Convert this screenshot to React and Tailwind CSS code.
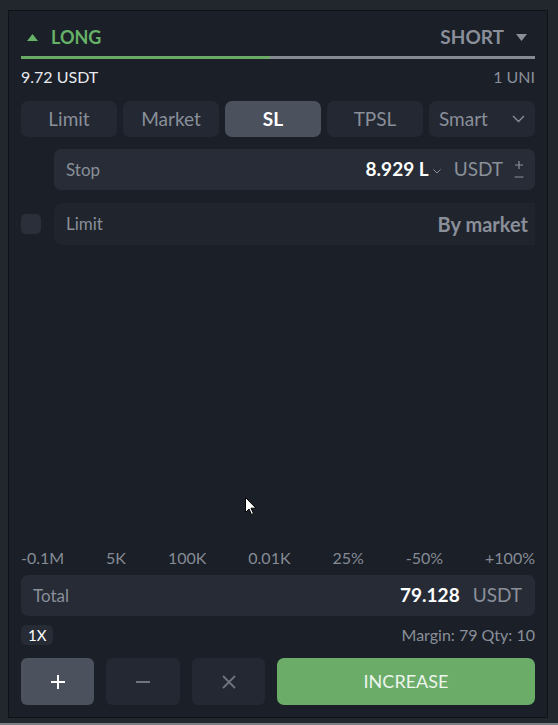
import React from 'react';

const font = { fontFamily: 'Lato, "Open Sans", sans-serif' };

const tabs = ['Limit', 'Market', 'SL', 'TPSL'];
const marks = ['-0.1M', '5K', '100K', '0.01K', '25%', '-50%', '+100%'];

const App = () => {
  return (
    <div className="w-[558px] h-[725px] bg-[#22262d] flex flex-col overflow-hidden" style={font}>
      <div className="pt-[10px] pl-[8px] pr-[10px]">
        <div className="w-[540px] h-[708px] border border-[#0e1116] bg-[#1a1f28] px-[12px] flex flex-col">
          {/* side switch */}
          <div className="mt-[11px] h-[30px] flex items-center justify-between">
            <div className="flex items-center gap-[13px] pl-[6px]">
              <svg width="11" height="7" viewBox="0 0 11 7"><path d="M5.5 0L11 7H0z" fill="#66b266" /></svg>
              <span className="text-[18px] font-bold text-[#66b266]">LONG</span>
            </div>
            <div className="flex items-center gap-[12px] pr-[8px]">
              <span className="text-[19px] font-bold text-[#8a8f99]">SHORT</span>
              <svg width="11" height="7" viewBox="0 0 11 7"><path d="M0 0H11L5.5 7z" fill="#8a8f99" /></svg>
            </div>
          </div>
          <div className="mt-[4px] h-[3px] flex">
            <div className="w-[249px] bg-[#6aaa64]" />
            <div className="flex-1 bg-[#868a93]" />
          </div>
          <div className="mt-[9px] h-[18px] flex items-center justify-between">
            <span className="text-[16px] text-[#e8eaee]">9.72 USDT</span>
            <span className="text-[16px] text-[#8a8f99]">1 UNI</span>
          </div>

          {/* order types */}
          <div className="mt-[15px] h-[36px] flex gap-[6px]">
            {tabs.map(t => (
              <div
                key={t}
                className={`w-[96px] rounded-[7px] flex items-center justify-center text-[19px] ${t === 'SL' ? 'bg-[#4b515d] text-white font-bold' : 'bg-[#232832] text-[#8a8f99]'}`}
              >
                {t}
              </div>
            ))}
            <div className="flex-1 rounded-[7px] bg-[#232832] flex items-center justify-between pl-[10px] pr-[10px] text-[19px] text-[#8a8f99]">
              <span>Smart</span>
              <svg width="13" height="8" viewBox="0 0 13 8"><path d="M1 1l5.5 5.5L12 1" stroke="#8a8f99" strokeWidth="1.3" fill="none" /></svg>
            </div>
          </div>

          {/* stop */}
          <div className="mt-[12px] h-[41px] ml-[33px] rounded-[7px] bg-[#272c36] flex items-center pl-[12px] pr-[11px]">
            <span className="text-[17px] text-[#8a8f99]">Stop</span>
            <span className="ml-auto text-[19px] font-bold text-white">8.929 L</span>
            <svg className="ml-[4px] mt-[3px]" width="8" height="5" viewBox="0 0 8 5"><path d="M0.5 0.5L4 4L7.5 0.5" stroke="#8a8f99" strokeWidth="1" fill="none" /></svg>
            <span className="ml-[13px] text-[19px] text-[#8a8f99]">USDT</span>
            <svg className="ml-[11px]" width="10" height="22" viewBox="0 0 10 22">
              <path d="M5 2v8M1 6h8M0.5 18h9" stroke="#8a8f99" strokeWidth="1.2" fill="none" />
            </svg>
          </div>

          {/* limit */}
          <div className="mt-[13px] h-[42px] flex items-center gap-[13px]">
            <div className="w-[20px] h-[20px] rounded-[5px] bg-[#2a2f39]" />
            <div className="flex-1 h-full rounded-l-[7px] bg-[#1f242d] flex items-center justify-between pl-[12px] pr-[7px]">
              <span className="text-[17px] text-[#8a8f99]">Limit</span>
              <span className="text-[20px] font-bold text-[#8a8f99]">By market</span>
            </div>
          </div>

          <div className="flex-1" />

          {/* marks */}
          <div className="h-[18px] flex items-center justify-between text-[16px] text-[#868b95]">
            {marks.map(m => <span key={m}>{m}</span>)}
          </div>

          {/* total */}
          <div className="mt-[8px] h-[41px] rounded-[7px] bg-[#262b35] flex items-center pl-[12px] pr-[13px]">
            <span className="text-[17px] text-[#8a8f99]">Total</span>
            <span className="ml-auto text-[19px] font-bold text-white">79.128</span>
            <span className="ml-[13px] text-[19px] text-[#8a8f99]">USDT</span>
          </div>

          <div className="mt-[9px] h-[20px] flex items-center justify-between">
            <div className="h-full px-[7px] rounded-[5px] bg-[#262b35] flex items-center text-[15px] text-white">1X</div>
            <span className="text-[16px] text-[#8a8f99]">Margin: 79 Qty: 10</span>
          </div>

          {/* actions */}
          <div className="mt-[13px] h-[47px] flex gap-[12px]">
            <div className="w-[73px] rounded-[6px] bg-[#4b515d] flex items-center justify-center">
              <svg width="16" height="16" viewBox="0 0 16 16"><path d="M8 1v14M1 8h14" stroke="#ffffff" strokeWidth="2" /></svg>
            </div>
            <div className="w-[74px] rounded-[6px] bg-[#232832] flex items-center justify-center">
              <svg width="16" height="16" viewBox="0 0 16 16"><path d="M1 8h14" stroke="#6f747e" strokeWidth="2" /></svg>
            </div>
            <div className="w-[73px] rounded-[6px] bg-[#232832] flex items-center justify-center">
              <svg width="16" height="16" viewBox="0 0 16 16"><path d="M2 2l12 12M14 2L2 14" stroke="#6f747e" strokeWidth="1.8" /></svg>
            </div>
            <div className="flex-1 rounded-[7px] bg-[#6aac68] flex items-center justify-center text-[18px] text-[#eef5ee]">
              INCREASE
            </div>
          </div>
          <div className="h-[12px]" />
        </div>
      </div>
      <div className="flex-1" />
      <div className="h-[2px] bg-[#7d7f83]" />

      {/* pointer */}
      <svg className="absolute left-[245px] top-[497px]" width="12" height="19" viewBox="0 0 12 19">
        <path d="M0.5 0.5v15l3.5-3.5 2.5 5.5 2-1-2.5-5.3h5z" fill="#ffffff" stroke="#000000" strokeWidth="1" />
      </svg>
    </div>
  );
};

export default App;
